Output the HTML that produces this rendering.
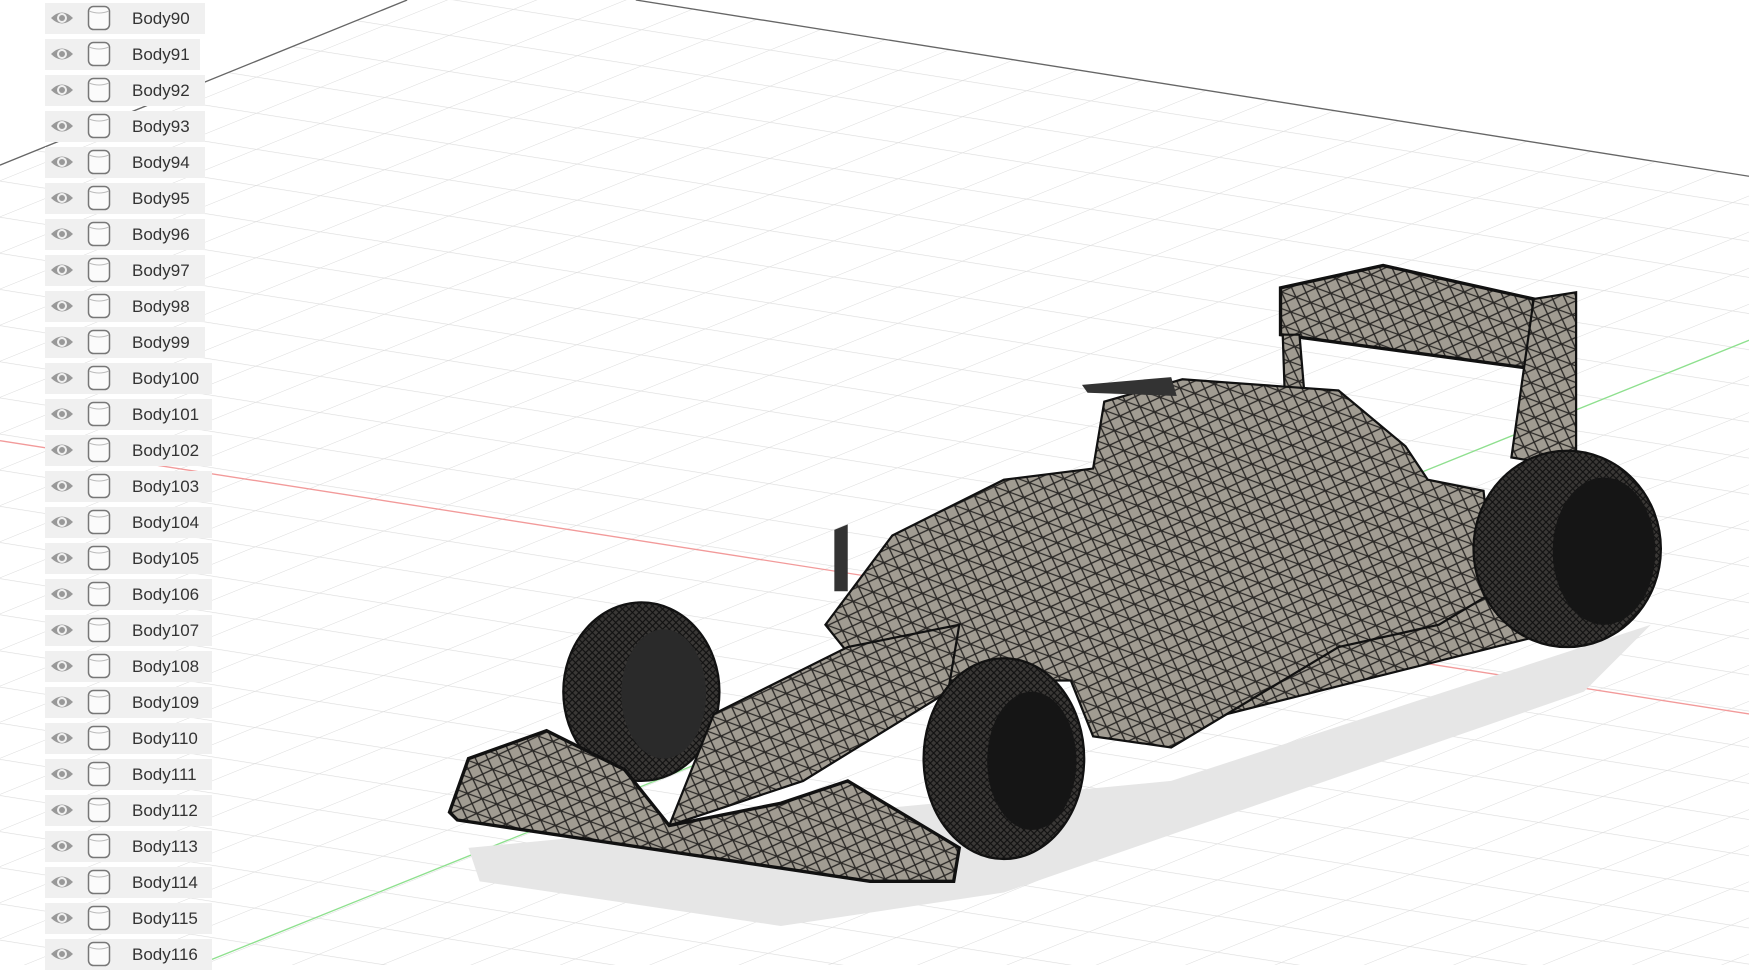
<!DOCTYPE html>
<html><head><meta charset="utf-8"><style>
html,body{margin:0;padding:0;width:1749px;height:965px;overflow:hidden;background:#fff;font-family:"Liberation Sans",sans-serif}
svg.bg{position:absolute;left:0;top:0}
.row{position:absolute;left:45px;height:31px;background:#f0f0f0;}
.row .t{position:absolute;left:87px;top:6px;font-size:17px;color:#333}
.row svg{position:absolute;top:3px}
</style></head><body>
<svg class="bg" width="1749" height="965" viewBox="0 0 1568 865" preserveAspectRatio="none">
<defs>
<pattern id="g1" width="40" height="32" patternUnits="userSpaceOnUse" patternTransform="rotate(9)">
<line x1="0" y1="0" x2="40" y2="0" stroke="#dcdcdc" stroke-width="1"/>
</pattern>
<pattern id="g2" width="40" height="30" patternUnits="userSpaceOnUse" patternTransform="rotate(-22)">
<line x1="0" y1="0" x2="40" y2="0" stroke="#dcdcdc" stroke-width="1"/>
</pattern>
<pattern id="mesh" width="14" height="14" patternUnits="userSpaceOnUse" patternTransform="rotate(20)">
<rect width="14" height="14" fill="#a19c92"/>
<path d="M0 0L14 14M14 0L0 14M0 7H14" stroke="#2a2826" stroke-width="1.2"/>
</pattern>
<pattern id="tire" width="6" height="6" patternUnits="userSpaceOnUse">
<rect width="6" height="6" fill="#3a3836"/>
<path d="M0 0L6 6M6 0L0 6" stroke="#111" stroke-width="1"/>
</pattern>
</defs>
<rect width="1568" height="865" fill="#fff"/>
<polygon points="0,148 365,0 570,0 1568,158 1568,865 0,865" fill="url(#g1)"/>
<polygon points="0,148 365,0 570,0 1568,158 1568,865 0,865" fill="url(#g2)"/>
<line x1="0" y1="148" x2="365" y2="0" stroke="#666" stroke-width="1.2"/>
<line x1="570" y1="0" x2="1568" y2="158" stroke="#666" stroke-width="1.2"/>
<line x1="0" y1="395" x2="1568" y2="640" stroke="#f29a9a" stroke-width="1.2"/>
<line x1="190" y1="860" x2="1568" y2="305" stroke="#8ee08e" stroke-width="1.2"/>
<!-- shadow -->
<polygon points="420,760 1050,700 1480,560 1420,620 900,800 700,830 430,790" fill="#e6e6e6"/>
<!-- rear wing -->
<polygon points="1148,258 1240,238 1375,268 1370,330 1148,300" fill="url(#mesh)" stroke="#111" stroke-width="3"/>
<polygon points="1375,268 1413,262 1413,420 1355,410" fill="url(#mesh)" stroke="#111" stroke-width="2"/>
<polygon points="1150,300 1165,300 1170,360 1152,360" fill="url(#mesh)" stroke="#111" stroke-width="2"/>
<!-- floor -->
<polygon points="1100,640 1380,570 1320,510 1150,560" fill="url(#mesh)" stroke="#111" stroke-width="2"/>
<!-- body -->
<polygon points="740,560 800,480 900,430 980,420 990,360 1060,340 1200,350 1260,400 1280,430 1330,440 1340,530 1290,560 1200,580 1100,640 1050,670 980,660 960,610 860,610 780,610" fill="url(#mesh)" stroke="#111" stroke-width="2"/>
<polygon points="970,345 1050,338 1055,355 975,352" fill="#333"/>
<polygon points="748,475 760,470 760,530 748,530" fill="#333"/>
<!-- front left tire -->
<ellipse cx="575" cy="620" rx="70" ry="80" fill="url(#tire)" stroke="#111" stroke-width="2"/>
<ellipse cx="595" cy="622" rx="38" ry="58" fill="#2a2a2a"/>
<!-- nose -->
<polygon points="600,740 640,640 760,580 860,560 850,620 720,700" fill="url(#mesh)" stroke="#111" stroke-width="2"/>
<!-- front wing -->
<polygon points="420,680 490,655 560,690 600,740 700,720 760,700 860,760 855,790 780,790 410,735 403,728" fill="url(#mesh)" stroke="#111" stroke-width="3"/>
<!-- front right tire -->
<ellipse cx="900" cy="680" rx="72" ry="90" fill="url(#tire)" stroke="#111" stroke-width="2"/>
<ellipse cx="925" cy="682" rx="40" ry="62" fill="#151515"/>
<!-- rear right tire -->
<ellipse cx="1405" cy="492" rx="84" ry="88" fill="url(#tire)" stroke="#111" stroke-width="2"/>
<ellipse cx="1438" cy="494" rx="46" ry="66" fill="#151515"/>
</svg>
<div class="row" style="top:3px;width:160px"><svg width="24" height="24" viewBox="0 0 24 24" style="left:5px"><path d="M1 12Q12 1 23 12Q12 23 1 12Z" fill="#999"/><circle cx="12" cy="12" r="5" fill="#f0f0f0"/><circle cx="12" cy="12" r="3" fill="#999"/></svg><svg width="24" height="26" viewBox="0 0 24 26" style="left:42px;top:2px"><rect x="1.5" y="1.5" width="21" height="23" rx="5" fill="#fbfbfb" stroke="#777" stroke-width="1.5"/><path d="M2 6Q12 10 22 6" stroke="#bbb" fill="none"/></svg><span class="t">Body90</span></div>
<div class="row" style="top:39px;width:155px"><svg width="24" height="24" viewBox="0 0 24 24" style="left:5px"><path d="M1 12Q12 1 23 12Q12 23 1 12Z" fill="#999"/><circle cx="12" cy="12" r="5" fill="#f0f0f0"/><circle cx="12" cy="12" r="3" fill="#999"/></svg><svg width="24" height="26" viewBox="0 0 24 26" style="left:42px;top:2px"><rect x="1.5" y="1.5" width="21" height="23" rx="5" fill="#fbfbfb" stroke="#777" stroke-width="1.5"/><path d="M2 6Q12 10 22 6" stroke="#bbb" fill="none"/></svg><span class="t">Body91</span></div>
<div class="row" style="top:75px;width:160px"><svg width="24" height="24" viewBox="0 0 24 24" style="left:5px"><path d="M1 12Q12 1 23 12Q12 23 1 12Z" fill="#999"/><circle cx="12" cy="12" r="5" fill="#f0f0f0"/><circle cx="12" cy="12" r="3" fill="#999"/></svg><svg width="24" height="26" viewBox="0 0 24 26" style="left:42px;top:2px"><rect x="1.5" y="1.5" width="21" height="23" rx="5" fill="#fbfbfb" stroke="#777" stroke-width="1.5"/><path d="M2 6Q12 10 22 6" stroke="#bbb" fill="none"/></svg><span class="t">Body92</span></div>
<div class="row" style="top:111px;width:160px"><svg width="24" height="24" viewBox="0 0 24 24" style="left:5px"><path d="M1 12Q12 1 23 12Q12 23 1 12Z" fill="#999"/><circle cx="12" cy="12" r="5" fill="#f0f0f0"/><circle cx="12" cy="12" r="3" fill="#999"/></svg><svg width="24" height="26" viewBox="0 0 24 26" style="left:42px;top:2px"><rect x="1.5" y="1.5" width="21" height="23" rx="5" fill="#fbfbfb" stroke="#777" stroke-width="1.5"/><path d="M2 6Q12 10 22 6" stroke="#bbb" fill="none"/></svg><span class="t">Body93</span></div>
<div class="row" style="top:147px;width:160px"><svg width="24" height="24" viewBox="0 0 24 24" style="left:5px"><path d="M1 12Q12 1 23 12Q12 23 1 12Z" fill="#999"/><circle cx="12" cy="12" r="5" fill="#f0f0f0"/><circle cx="12" cy="12" r="3" fill="#999"/></svg><svg width="24" height="26" viewBox="0 0 24 26" style="left:42px;top:2px"><rect x="1.5" y="1.5" width="21" height="23" rx="5" fill="#fbfbfb" stroke="#777" stroke-width="1.5"/><path d="M2 6Q12 10 22 6" stroke="#bbb" fill="none"/></svg><span class="t">Body94</span></div>
<div class="row" style="top:183px;width:160px"><svg width="24" height="24" viewBox="0 0 24 24" style="left:5px"><path d="M1 12Q12 1 23 12Q12 23 1 12Z" fill="#999"/><circle cx="12" cy="12" r="5" fill="#f0f0f0"/><circle cx="12" cy="12" r="3" fill="#999"/></svg><svg width="24" height="26" viewBox="0 0 24 26" style="left:42px;top:2px"><rect x="1.5" y="1.5" width="21" height="23" rx="5" fill="#fbfbfb" stroke="#777" stroke-width="1.5"/><path d="M2 6Q12 10 22 6" stroke="#bbb" fill="none"/></svg><span class="t">Body95</span></div>
<div class="row" style="top:219px;width:160px"><svg width="24" height="24" viewBox="0 0 24 24" style="left:5px"><path d="M1 12Q12 1 23 12Q12 23 1 12Z" fill="#999"/><circle cx="12" cy="12" r="5" fill="#f0f0f0"/><circle cx="12" cy="12" r="3" fill="#999"/></svg><svg width="24" height="26" viewBox="0 0 24 26" style="left:42px;top:2px"><rect x="1.5" y="1.5" width="21" height="23" rx="5" fill="#fbfbfb" stroke="#777" stroke-width="1.5"/><path d="M2 6Q12 10 22 6" stroke="#bbb" fill="none"/></svg><span class="t">Body96</span></div>
<div class="row" style="top:255px;width:160px"><svg width="24" height="24" viewBox="0 0 24 24" style="left:5px"><path d="M1 12Q12 1 23 12Q12 23 1 12Z" fill="#999"/><circle cx="12" cy="12" r="5" fill="#f0f0f0"/><circle cx="12" cy="12" r="3" fill="#999"/></svg><svg width="24" height="26" viewBox="0 0 24 26" style="left:42px;top:2px"><rect x="1.5" y="1.5" width="21" height="23" rx="5" fill="#fbfbfb" stroke="#777" stroke-width="1.5"/><path d="M2 6Q12 10 22 6" stroke="#bbb" fill="none"/></svg><span class="t">Body97</span></div>
<div class="row" style="top:291px;width:160px"><svg width="24" height="24" viewBox="0 0 24 24" style="left:5px"><path d="M1 12Q12 1 23 12Q12 23 1 12Z" fill="#999"/><circle cx="12" cy="12" r="5" fill="#f0f0f0"/><circle cx="12" cy="12" r="3" fill="#999"/></svg><svg width="24" height="26" viewBox="0 0 24 26" style="left:42px;top:2px"><rect x="1.5" y="1.5" width="21" height="23" rx="5" fill="#fbfbfb" stroke="#777" stroke-width="1.5"/><path d="M2 6Q12 10 22 6" stroke="#bbb" fill="none"/></svg><span class="t">Body98</span></div>
<div class="row" style="top:327px;width:160px"><svg width="24" height="24" viewBox="0 0 24 24" style="left:5px"><path d="M1 12Q12 1 23 12Q12 23 1 12Z" fill="#999"/><circle cx="12" cy="12" r="5" fill="#f0f0f0"/><circle cx="12" cy="12" r="3" fill="#999"/></svg><svg width="24" height="26" viewBox="0 0 24 26" style="left:42px;top:2px"><rect x="1.5" y="1.5" width="21" height="23" rx="5" fill="#fbfbfb" stroke="#777" stroke-width="1.5"/><path d="M2 6Q12 10 22 6" stroke="#bbb" fill="none"/></svg><span class="t">Body99</span></div>
<div class="row" style="top:363px;width:167px"><svg width="24" height="24" viewBox="0 0 24 24" style="left:5px"><path d="M1 12Q12 1 23 12Q12 23 1 12Z" fill="#999"/><circle cx="12" cy="12" r="5" fill="#f0f0f0"/><circle cx="12" cy="12" r="3" fill="#999"/></svg><svg width="24" height="26" viewBox="0 0 24 26" style="left:42px;top:2px"><rect x="1.5" y="1.5" width="21" height="23" rx="5" fill="#fbfbfb" stroke="#777" stroke-width="1.5"/><path d="M2 6Q12 10 22 6" stroke="#bbb" fill="none"/></svg><span class="t">Body100</span></div>
<div class="row" style="top:399px;width:167px"><svg width="24" height="24" viewBox="0 0 24 24" style="left:5px"><path d="M1 12Q12 1 23 12Q12 23 1 12Z" fill="#999"/><circle cx="12" cy="12" r="5" fill="#f0f0f0"/><circle cx="12" cy="12" r="3" fill="#999"/></svg><svg width="24" height="26" viewBox="0 0 24 26" style="left:42px;top:2px"><rect x="1.5" y="1.5" width="21" height="23" rx="5" fill="#fbfbfb" stroke="#777" stroke-width="1.5"/><path d="M2 6Q12 10 22 6" stroke="#bbb" fill="none"/></svg><span class="t">Body101</span></div>
<div class="row" style="top:435px;width:167px"><svg width="24" height="24" viewBox="0 0 24 24" style="left:5px"><path d="M1 12Q12 1 23 12Q12 23 1 12Z" fill="#999"/><circle cx="12" cy="12" r="5" fill="#f0f0f0"/><circle cx="12" cy="12" r="3" fill="#999"/></svg><svg width="24" height="26" viewBox="0 0 24 26" style="left:42px;top:2px"><rect x="1.5" y="1.5" width="21" height="23" rx="5" fill="#fbfbfb" stroke="#777" stroke-width="1.5"/><path d="M2 6Q12 10 22 6" stroke="#bbb" fill="none"/></svg><span class="t">Body102</span></div>
<div class="row" style="top:471px;width:167px"><svg width="24" height="24" viewBox="0 0 24 24" style="left:5px"><path d="M1 12Q12 1 23 12Q12 23 1 12Z" fill="#999"/><circle cx="12" cy="12" r="5" fill="#f0f0f0"/><circle cx="12" cy="12" r="3" fill="#999"/></svg><svg width="24" height="26" viewBox="0 0 24 26" style="left:42px;top:2px"><rect x="1.5" y="1.5" width="21" height="23" rx="5" fill="#fbfbfb" stroke="#777" stroke-width="1.5"/><path d="M2 6Q12 10 22 6" stroke="#bbb" fill="none"/></svg><span class="t">Body103</span></div>
<div class="row" style="top:507px;width:167px"><svg width="24" height="24" viewBox="0 0 24 24" style="left:5px"><path d="M1 12Q12 1 23 12Q12 23 1 12Z" fill="#999"/><circle cx="12" cy="12" r="5" fill="#f0f0f0"/><circle cx="12" cy="12" r="3" fill="#999"/></svg><svg width="24" height="26" viewBox="0 0 24 26" style="left:42px;top:2px"><rect x="1.5" y="1.5" width="21" height="23" rx="5" fill="#fbfbfb" stroke="#777" stroke-width="1.5"/><path d="M2 6Q12 10 22 6" stroke="#bbb" fill="none"/></svg><span class="t">Body104</span></div>
<div class="row" style="top:543px;width:167px"><svg width="24" height="24" viewBox="0 0 24 24" style="left:5px"><path d="M1 12Q12 1 23 12Q12 23 1 12Z" fill="#999"/><circle cx="12" cy="12" r="5" fill="#f0f0f0"/><circle cx="12" cy="12" r="3" fill="#999"/></svg><svg width="24" height="26" viewBox="0 0 24 26" style="left:42px;top:2px"><rect x="1.5" y="1.5" width="21" height="23" rx="5" fill="#fbfbfb" stroke="#777" stroke-width="1.5"/><path d="M2 6Q12 10 22 6" stroke="#bbb" fill="none"/></svg><span class="t">Body105</span></div>
<div class="row" style="top:579px;width:167px"><svg width="24" height="24" viewBox="0 0 24 24" style="left:5px"><path d="M1 12Q12 1 23 12Q12 23 1 12Z" fill="#999"/><circle cx="12" cy="12" r="5" fill="#f0f0f0"/><circle cx="12" cy="12" r="3" fill="#999"/></svg><svg width="24" height="26" viewBox="0 0 24 26" style="left:42px;top:2px"><rect x="1.5" y="1.5" width="21" height="23" rx="5" fill="#fbfbfb" stroke="#777" stroke-width="1.5"/><path d="M2 6Q12 10 22 6" stroke="#bbb" fill="none"/></svg><span class="t">Body106</span></div>
<div class="row" style="top:615px;width:167px"><svg width="24" height="24" viewBox="0 0 24 24" style="left:5px"><path d="M1 12Q12 1 23 12Q12 23 1 12Z" fill="#999"/><circle cx="12" cy="12" r="5" fill="#f0f0f0"/><circle cx="12" cy="12" r="3" fill="#999"/></svg><svg width="24" height="26" viewBox="0 0 24 26" style="left:42px;top:2px"><rect x="1.5" y="1.5" width="21" height="23" rx="5" fill="#fbfbfb" stroke="#777" stroke-width="1.5"/><path d="M2 6Q12 10 22 6" stroke="#bbb" fill="none"/></svg><span class="t">Body107</span></div>
<div class="row" style="top:651px;width:167px"><svg width="24" height="24" viewBox="0 0 24 24" style="left:5px"><path d="M1 12Q12 1 23 12Q12 23 1 12Z" fill="#999"/><circle cx="12" cy="12" r="5" fill="#f0f0f0"/><circle cx="12" cy="12" r="3" fill="#999"/></svg><svg width="24" height="26" viewBox="0 0 24 26" style="left:42px;top:2px"><rect x="1.5" y="1.5" width="21" height="23" rx="5" fill="#fbfbfb" stroke="#777" stroke-width="1.5"/><path d="M2 6Q12 10 22 6" stroke="#bbb" fill="none"/></svg><span class="t">Body108</span></div>
<div class="row" style="top:687px;width:167px"><svg width="24" height="24" viewBox="0 0 24 24" style="left:5px"><path d="M1 12Q12 1 23 12Q12 23 1 12Z" fill="#999"/><circle cx="12" cy="12" r="5" fill="#f0f0f0"/><circle cx="12" cy="12" r="3" fill="#999"/></svg><svg width="24" height="26" viewBox="0 0 24 26" style="left:42px;top:2px"><rect x="1.5" y="1.5" width="21" height="23" rx="5" fill="#fbfbfb" stroke="#777" stroke-width="1.5"/><path d="M2 6Q12 10 22 6" stroke="#bbb" fill="none"/></svg><span class="t">Body109</span></div>
<div class="row" style="top:723px;width:167px"><svg width="24" height="24" viewBox="0 0 24 24" style="left:5px"><path d="M1 12Q12 1 23 12Q12 23 1 12Z" fill="#999"/><circle cx="12" cy="12" r="5" fill="#f0f0f0"/><circle cx="12" cy="12" r="3" fill="#999"/></svg><svg width="24" height="26" viewBox="0 0 24 26" style="left:42px;top:2px"><rect x="1.5" y="1.5" width="21" height="23" rx="5" fill="#fbfbfb" stroke="#777" stroke-width="1.5"/><path d="M2 6Q12 10 22 6" stroke="#bbb" fill="none"/></svg><span class="t">Body110</span></div>
<div class="row" style="top:759px;width:167px"><svg width="24" height="24" viewBox="0 0 24 24" style="left:5px"><path d="M1 12Q12 1 23 12Q12 23 1 12Z" fill="#999"/><circle cx="12" cy="12" r="5" fill="#f0f0f0"/><circle cx="12" cy="12" r="3" fill="#999"/></svg><svg width="24" height="26" viewBox="0 0 24 26" style="left:42px;top:2px"><rect x="1.5" y="1.5" width="21" height="23" rx="5" fill="#fbfbfb" stroke="#777" stroke-width="1.5"/><path d="M2 6Q12 10 22 6" stroke="#bbb" fill="none"/></svg><span class="t">Body111</span></div>
<div class="row" style="top:795px;width:167px"><svg width="24" height="24" viewBox="0 0 24 24" style="left:5px"><path d="M1 12Q12 1 23 12Q12 23 1 12Z" fill="#999"/><circle cx="12" cy="12" r="5" fill="#f0f0f0"/><circle cx="12" cy="12" r="3" fill="#999"/></svg><svg width="24" height="26" viewBox="0 0 24 26" style="left:42px;top:2px"><rect x="1.5" y="1.5" width="21" height="23" rx="5" fill="#fbfbfb" stroke="#777" stroke-width="1.5"/><path d="M2 6Q12 10 22 6" stroke="#bbb" fill="none"/></svg><span class="t">Body112</span></div>
<div class="row" style="top:831px;width:167px"><svg width="24" height="24" viewBox="0 0 24 24" style="left:5px"><path d="M1 12Q12 1 23 12Q12 23 1 12Z" fill="#999"/><circle cx="12" cy="12" r="5" fill="#f0f0f0"/><circle cx="12" cy="12" r="3" fill="#999"/></svg><svg width="24" height="26" viewBox="0 0 24 26" style="left:42px;top:2px"><rect x="1.5" y="1.5" width="21" height="23" rx="5" fill="#fbfbfb" stroke="#777" stroke-width="1.5"/><path d="M2 6Q12 10 22 6" stroke="#bbb" fill="none"/></svg><span class="t">Body113</span></div>
<div class="row" style="top:867px;width:167px"><svg width="24" height="24" viewBox="0 0 24 24" style="left:5px"><path d="M1 12Q12 1 23 12Q12 23 1 12Z" fill="#999"/><circle cx="12" cy="12" r="5" fill="#f0f0f0"/><circle cx="12" cy="12" r="3" fill="#999"/></svg><svg width="24" height="26" viewBox="0 0 24 26" style="left:42px;top:2px"><rect x="1.5" y="1.5" width="21" height="23" rx="5" fill="#fbfbfb" stroke="#777" stroke-width="1.5"/><path d="M2 6Q12 10 22 6" stroke="#bbb" fill="none"/></svg><span class="t">Body114</span></div>
<div class="row" style="top:903px;width:167px"><svg width="24" height="24" viewBox="0 0 24 24" style="left:5px"><path d="M1 12Q12 1 23 12Q12 23 1 12Z" fill="#999"/><circle cx="12" cy="12" r="5" fill="#f0f0f0"/><circle cx="12" cy="12" r="3" fill="#999"/></svg><svg width="24" height="26" viewBox="0 0 24 26" style="left:42px;top:2px"><rect x="1.5" y="1.5" width="21" height="23" rx="5" fill="#fbfbfb" stroke="#777" stroke-width="1.5"/><path d="M2 6Q12 10 22 6" stroke="#bbb" fill="none"/></svg><span class="t">Body115</span></div>
<div class="row" style="top:939px;width:167px"><svg width="24" height="24" viewBox="0 0 24 24" style="left:5px"><path d="M1 12Q12 1 23 12Q12 23 1 12Z" fill="#999"/><circle cx="12" cy="12" r="5" fill="#f0f0f0"/><circle cx="12" cy="12" r="3" fill="#999"/></svg><svg width="24" height="26" viewBox="0 0 24 26" style="left:42px;top:2px"><rect x="1.5" y="1.5" width="21" height="23" rx="5" fill="#fbfbfb" stroke="#777" stroke-width="1.5"/><path d="M2 6Q12 10 22 6" stroke="#bbb" fill="none"/></svg><span class="t">Body116</span></div>
</body></html>
